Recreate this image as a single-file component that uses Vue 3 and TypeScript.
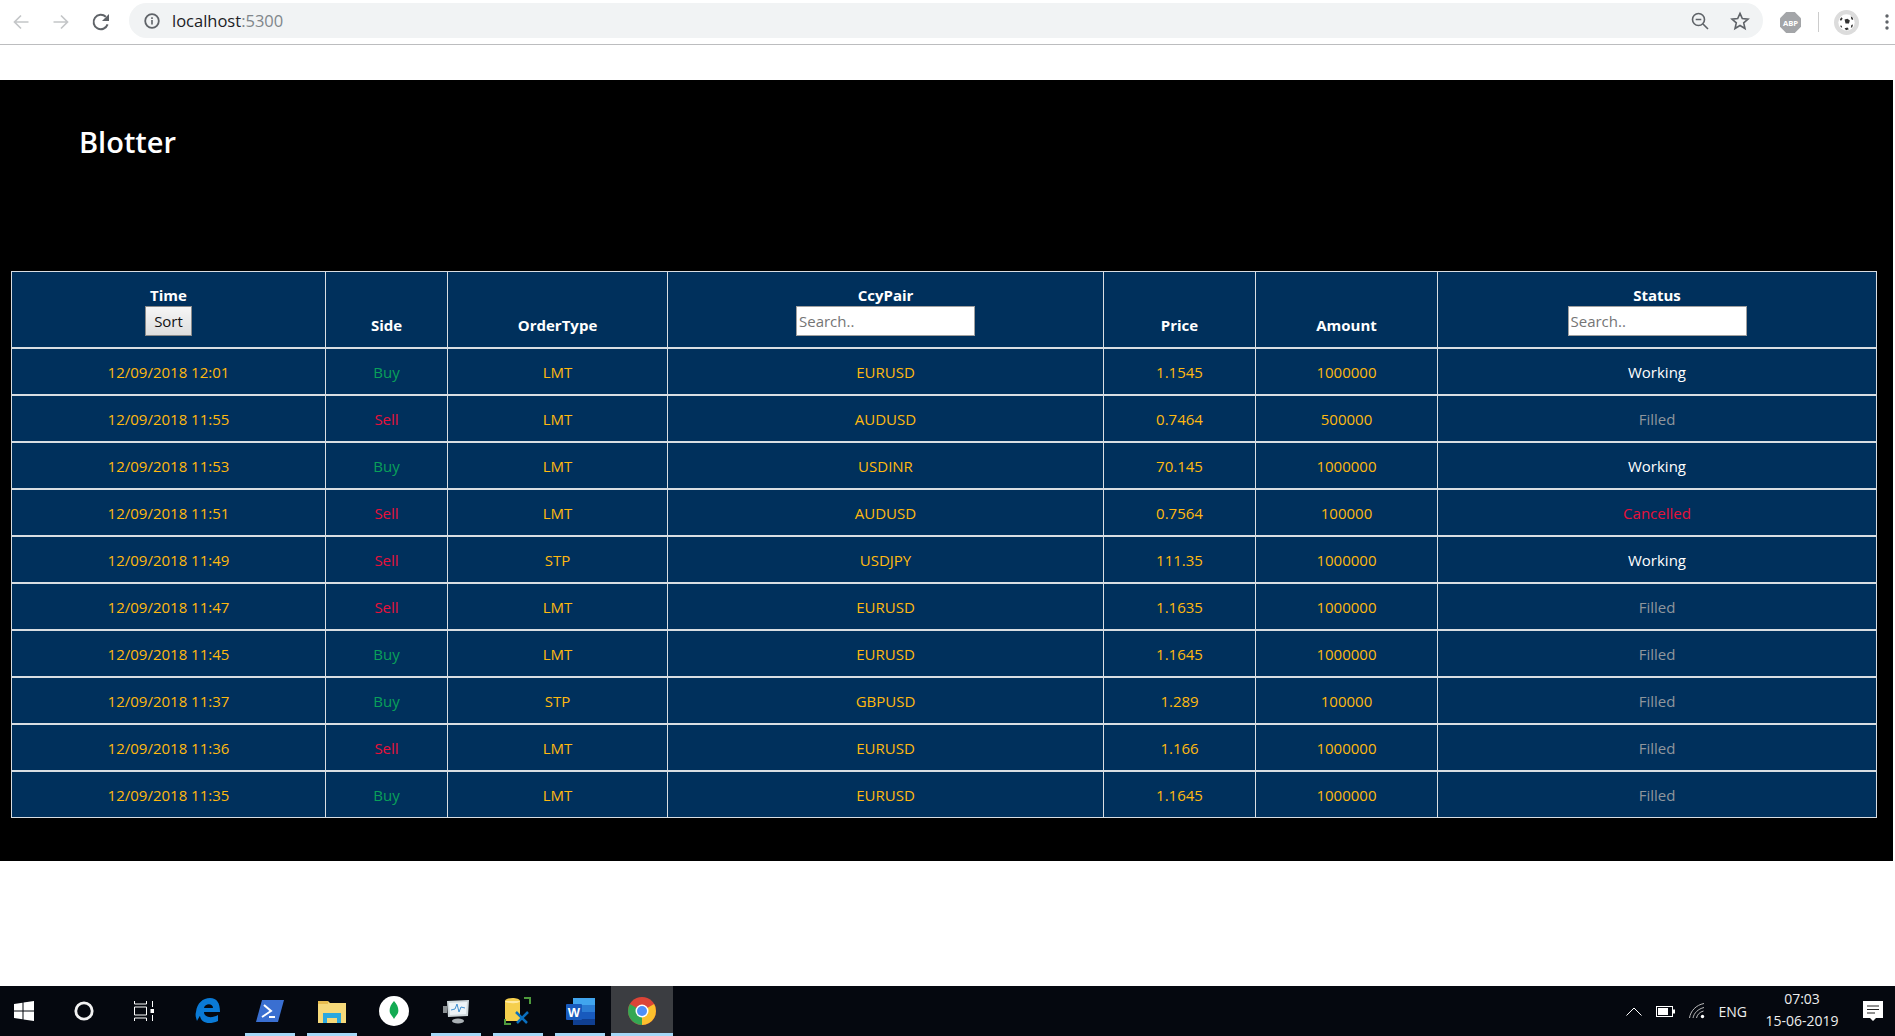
<template>
  <div class="screen">
    <header class="chrome-bar">
      <div class="nav-buttons">
        <svg class="nav-icon" viewBox="0 0 20 20"><path d="M17.500 10H3.500M10 3.500l-6.500 6.500 6.500 6.500" fill="none" stroke="#c4c6c8" stroke-width="1.700" /></svg>
        <svg class="nav-icon" viewBox="0 0 20 20"><path d="M2.500 10h14M10 3.500l6.500 6.500-6.500 6.500" fill="none" stroke="#c4c6c8" stroke-width="1.700" /></svg>
        <svg class="nav-icon" viewBox="0 0 20 20"><path d="M16.600 12.400A7.200 7.200 0 1 1 14.800 4.800" fill="none" stroke="#5f6368" stroke-width="2" /><path d="M18 2v7h-7z" fill="#5f6368" /></svg>
      </div>
      <div class="omnibox">
        <svg class="info-icon" viewBox="0 0 16 16"><circle cx="8" cy="8" r="6.800" fill="none" stroke="#5f6368" stroke-width="1.800" /><path d="M7.200 7h1.600v4.600H7.200zM7.200 4.300h1.600v1.600H7.200z" fill="#5f6368" /></svg>
        <span class="url">localhost<span class="url-port">:5300</span></span>
        <span class="spacer"></span>
        <svg class="omni-icon" viewBox="0 0 20 20"><circle cx="8.500" cy="8.500" r="6" fill="none" stroke="#5f6368" stroke-width="1.600" /><path d="M5.700 8.500h5.600M13 13l5 5" stroke="#5f6368" stroke-width="1.600" fill="none" /></svg>
        <svg class="omni-icon star" viewBox="0 0 20 20"><path d="M10 2.400l2.300 5.200 5.700.5-4.300 3.800 1.300 5.600-5-3-5 3 1.300-5.600L2 8.100l5.700-.5z" fill="none" stroke="#5f6368" stroke-width="1.600" /></svg>
      </div>
      <svg class="abp" viewBox="0 0 22 22"><path d="M6.500 0h9L22 6.500v9L15.500 22h-9L0 15.500v-9z" fill="#a3a5a8" /><text x="11" y="14.500" text-anchor="middle" class="abp-text">ABP</text></svg>
      <div class="toolbar-sep"></div>
      <svg class="avatar" viewBox="0 0 26 26">
        <circle cx="13" cy="13" r="13" fill="#dcdcdc" />
        <circle cx="13" cy="13" r="8.500" fill="#fff" />
        <path d="M11 10l3-1 2.500 2-1 3h-3.500zM6 9.500l2-2 1 1.500-1.800 2.500zM17.500 6.500l2 1.500.5 2.500-2-1zM6.500 16l1.500.5.5 2-1.500-.8zM11 19l3-.8 1.500 1.800-3 1zM18 15.500l1.800-.5-.8 3-1.500.5z" fill="#333" />
      </svg>
      <svg class="menu-dots" viewBox="0 0 4 16"><circle cx="2" cy="2" r="1.700" fill="#5f6368" /><circle cx="2" cy="8" r="1.700" fill="#5f6368" /><circle cx="2" cy="14" r="1.700" fill="#5f6368" /></svg>
    </header>

    <main class="page">
      <section class="blotter">
        <h1 class="title">Blotter</h1>
        <table class="orders">
          <colgroup>
            <col v-for="c in colWidths" :key="c" :width="c" />
          </colgroup>
          <thead>
            <tr>
              <th>
                <div>Time</div>
                <button class="sort-btn" type="button">Sort</button>
              </th>
              <th class="plain">Side</th>
              <th class="plain">OrderType</th>
              <th>
                <div>CcyPair</div>
                <input class="search" type="text" placeholder="Search.." />
              </th>
              <th class="plain">Price</th>
              <th class="plain">Amount</th>
              <th>
                <div>Status</div>
                <input class="search" type="text" placeholder="Search.." />
              </th>
            </tr>
          </thead>
          <tbody>
            <tr v-for="o in orders" :key="o.time">
              <td>{{ o.time }}</td>
              <td :class="o.side === 'Buy' ? 'buy' : 'sell'">{{ o.side }}</td>
              <td>{{ o.type }}</td>
              <td>{{ o.pair }}</td>
              <td>{{ o.price }}</td>
              <td>{{ o.amount }}</td>
              <td :class="'st-' + o.status.toLowerCase()">{{ o.status }}</td>
            </tr>
          </tbody>
        </table>
      </section>
    </main>

    <footer class="taskbar">
      <div class="task start">
        <svg width="20" height="20" viewBox="0 0 20 20"><path d="M0 3l8.500-1.200v7.700H0zM9.500 1.600L20 0v9.500H9.500zM0 10.500h8.500v7.700L0 17zM9.500 10.500H20V20L9.500 18.400z" fill="#fff" /></svg>
      </div>
      <div class="task cortana">
        <svg width="20" height="20" viewBox="0 0 20 20"><circle cx="10" cy="10" r="8.200" fill="none" stroke="#f2f2f2" stroke-width="2.800" /></svg>
      </div>
      <div class="task">
        <svg width="20" height="20" viewBox="0 0 20 20"><path d="M.5 0v3h12V0M.5 20v-3h12v3M.5 6h12v8H.5zM18.500 0v6M18.500 14v6" fill="none" stroke="#fff" /><rect x="16.500" y="8" width="4" height="4" fill="#fff" /></svg>
      </div>
      <div class="task app first-app">
        <svg width="26" height="26" viewBox="0 0 26 26"><path d="M1 14C2 5 8 0 15 0c7 0 10 5 10 14H9c0 5 7 7 14 3v6c-9 4-17 2-18-5-1 1-2 3-3 5-1-3-2-6-1-9zM9 10h9c0-5-8-5-9 0z" fill="#0a7ad6" /></svg>
      </div>
      <div class="task app running">
        <svg width="28" height="22" viewBox="0 0 28 22"><path d="M6 0h22l-6 22H0z" fill="#3a6fd1" /><path d="M8 5l7 6-9 6M13 17h6" fill="none" stroke="#fff" stroke-width="2" /></svg>
      </div>
      <div class="task app running">
        <svg width="28" height="24" viewBox="0 0 28 24"><path d="M0 2h10l2 2h16v20H0z" fill="#f6d97a" /><path d="M0 2h10v3H0z" fill="#e8bd4f" /><path d="M5 14h18v10h-4v-5H9v5H5z" fill="#2aa8e0" /></svg>
      </div>
      <div class="task app">
        <svg width="30" height="30" viewBox="0 0 30 30"><circle cx="15" cy="15" r="15" fill="#fff" /><path d="M15 5c4 4 5 9 4 12-1 2-3 4-4 6-1-2-3-4-4-6-1-3 0-8 4-12z" fill="#13aa52" /></svg>
      </div>
      <div class="task app running">
        <svg width="28" height="26" viewBox="0 0 28 26"><path d="M5 3l22-1-1 16-20 1z" fill="#cfd8dc" /><path d="M7 5l18-1-1 12-16 1z" fill="#eef4f8" /><path d="M9 12l4-1 2-5 2 8 2-5 4 1" fill="none" stroke="#3f8fd0" /><ellipse cx="16" cy="23" rx="6" ry="2.500" fill="#aab0b4" /><rect x="1" y="8" width="4" height="7" fill="#8a8f92" /></svg>
      </div>
      <div class="task app running">
        <svg width="28" height="28" viewBox="0 0 28 28"><path d="M1 4c0-4 15-4 15 0v20H1z" fill="#f5cf4d" /><path d="M1 4c0 3 15 3 15 0" fill="#ffe9a0" /><path d="M20 1h6v6M1 22v5h6" fill="none" stroke="#4e9a3c" stroke-width="2" /><path d="M12 15l11 11M24 15L13 26" stroke="#0a6fbf" stroke-width="2.500" /></svg>
      </div>
      <div class="task app running">
        <svg width="29" height="27" viewBox="0 0 29 27"><rect x="7" y="0" width="22" height="27" rx="1" fill="#2b7cd3" /><rect x="7" y="0" width="22" height="7" fill="#41a5ee" /><rect x="7" y="14" width="22" height="7" fill="#185abd" /><rect x="7" y="21" width="22" height="6" fill="#103f91" /><rect x="0" y="6" width="16" height="16" rx="1" fill="#185abd" /><text x="8" y="18.500" text-anchor="middle" class="word-w">W</text></svg>
      </div>
      <div class="task app running active">
        <svg width="28" height="28" viewBox="0 0 28 28">
          <circle cx="14" cy="14" r="14" fill="#db4437" />
          <path d="M14 14L26.100 7A14 14 0 0 1 14 28z" fill="#fbc02d" />
          <path d="M14 14L14 28A14 14 0 0 1 1.900 7z" fill="#34a853" />
          <circle cx="14" cy="14" r="6.500" fill="#fff" />
          <circle cx="14" cy="14" r="5" fill="#4f8ff7" />
        </svg>
      </div>
      <span class="spacer"></span>
      <div class="tray">
        <svg width="16" height="9" viewBox="0 0 16 9"><path d="M.5 8.500L8 1l7.500 7.500" fill="none" stroke="#fff" /></svg>
        <svg width="19" height="11" viewBox="0 0 19 11"><rect x=".5" y=".5" width="16" height="10" fill="none" stroke="#fff" /><rect x="2" y="2" width="10" height="7" fill="#fff" /><rect x="17" y="3.500" width="2" height="4" fill="#fff" /></svg>
        <svg width="16" height="16" viewBox="0 0 16 16"><path d="M.5 15C1.500 8 7 2 15 .5M4 15C5 10 9 6 15 4.500M7.500 15c.5-3 3-6 7-7" fill="none" stroke="#bbb" /><circle cx="13.500" cy="13.500" r="1.700" fill="#fff" /></svg>
        <span class="lang">ENG</span>
        <div class="clock">
          <div>07:03</div>
          <div>15-06-2019</div>
        </div>
        <svg class="notif" width="20" height="20" viewBox="0 0 20 20"><path d="M0 0h20v17h-7l-3 3-3-3H0z" fill="#fff" /><path d="M4 5h12M4 8.500h12M4 12h8" stroke="#222" /></svg>
      </div>
    </footer>
  </div>
</template>

<script setup lang="ts">
type Order = {
  time: string;
  side: 'Buy' | 'Sell';
  type: string;
  pair: string;
  price: string;
  amount: string;
  status: string;
};

const colWidths = [314, 122, 220, 436, 152, 182, 439];

const orders: Order[] = [
  { time: '12/09/2018 12:01', side: 'Buy', type: 'LMT', pair: 'EURUSD', price: '1.1545', amount: '1000000', status: 'Working' },
  { time: '12/09/2018 11:55', side: 'Sell', type: 'LMT', pair: 'AUDUSD', price: '0.7464', amount: '500000', status: 'Filled' },
  { time: '12/09/2018 11:53', side: 'Buy', type: 'LMT', pair: 'USDINR', price: '70.145', amount: '1000000', status: 'Working' },
  { time: '12/09/2018 11:51', side: 'Sell', type: 'LMT', pair: 'AUDUSD', price: '0.7564', amount: '100000', status: 'Cancelled' },
  { time: '12/09/2018 11:49', side: 'Sell', type: 'STP', pair: 'USDJPY', price: '111.35', amount: '1000000', status: 'Working' },
  { time: '12/09/2018 11:47', side: 'Sell', type: 'LMT', pair: 'EURUSD', price: '1.1635', amount: '1000000', status: 'Filled' },
  { time: '12/09/2018 11:45', side: 'Buy', type: 'LMT', pair: 'EURUSD', price: '1.1645', amount: '1000000', status: 'Filled' },
  { time: '12/09/2018 11:37', side: 'Buy', type: 'STP', pair: 'GBPUSD', price: '1.289', amount: '100000', status: 'Filled' },
  { time: '12/09/2018 11:36', side: 'Sell', type: 'LMT', pair: 'EURUSD', price: '1.166', amount: '1000000', status: 'Filled' },
  { time: '12/09/2018 11:35', side: 'Buy', type: 'LMT', pair: 'EURUSD', price: '1.1645', amount: '1000000', status: 'Filled' }
];
</script>

<style>
html,
body {
  margin: 0;
  background: #fff;
  overflow: hidden;
}
</style>

<style scoped>
.screen {
  width: 1895px;
  height: 1036px;
  display: flex;
  flex-direction: column;
  font-family: "Open Sans", "Noto Sans", sans-serif;
}

.chrome-bar {
  height: 44px;
  box-sizing: content-box;
  border-bottom: 1px solid #bcbdbf;
  display: flex;
  align-items: center;
  background: #fff;
  flex: none;
}

.nav-buttons {
  display: flex;
  gap: 20px;
  padding-left: 11px;
  width: 118px;
  box-sizing: border-box;
  margin-right: 11px;
}

.nav-icon {
  width: 20px;
  height: 20px;
}

.omnibox {
  width: 1634px;
  height: 35px;
  background: #f1f3f4;
  border-radius: 18px;
  display: flex;
  align-items: center;
  padding: 0 14px 0 15px;
  box-sizing: border-box;
  align-self: flex-start;
  margin-top: 3px;
}

.info-icon {
  width: 16px;
  height: 16px;
  margin-right: 12px;
}

.url {
  font-size: 16.500px;
  color: #202124;
}

.url-port {
  color: #80868b;
}

.spacer {
  flex: 1;
}

.omni-icon {
  width: 20px;
  height: 20px;
}

.star {
  margin-left: 20px;
  margin-right: -1px;
}

.abp {
  width: 21px;
  height: 21px;
  margin-left: 17px;
}

.abp-text {
  font-size: 8px;
  font-weight: 700;
  fill: #fff;
  font-family: "Open Sans", sans-serif;
}

.toolbar-sep {
  width: 1px;
  height: 20px;
  background: #ccc;
  margin-left: 17px;
}

.avatar {
  width: 25px;
  height: 25px;
  margin-left: 15px;
}

.menu-dots {
  width: 4px;
  height: 16px;
  margin-left: 26px;
}

.page {
  flex: 1;
  padding: 35px 2px 0 0;
  background: #fff;
}

.blotter {
  height: 781px;
  background: #000;
  padding: 41px 16px 0 11px;
  box-sizing: border-box;
}

.title {
  margin: 0 0 109px 68px;
  font-size: 29px;
  font-weight: 600;
  line-height: 41px;
  color: #fff;
}

.orders {
  border-collapse: collapse;
  table-layout: fixed;
  width: 1865px;
  background: #00305c;
  font-size: 15px;
  text-align: center;
}

.orders th,
.orders td {
  border: 1px solid #d8dde2;
  padding: 0;
}

.orders th {
  height: 64px;
  border-bottom-width: 2px;
  color: #fff;
  font-weight: 700;
  vertical-align: bottom;
  padding-bottom: 11px;
  line-height: 18px;
}

.orders th.plain {
  height: 62px;
  padding-bottom: 13px;
}

.orders td {
  height: 45px;
  border-bottom-width: 2px;
  color: #ffb90f;
}

.orders tbody tr:last-child td {
  border-bottom-width: 1px;
}

.sort-btn {
  display: block;
  margin: 2px auto 0;
  width: 47px;
  height: 30px;
  padding: 0;
  box-sizing: border-box;
  border: 1px solid #8a8a8a;
  background: linear-gradient(#f6f6f6, #dedede);
  font: 15px "Open Sans", sans-serif;
  color: #111;
}

.search {
  display: block;
  margin: 2px auto 0;
  width: 179px;
  height: 30px;
  padding: 0 2px;
  box-sizing: border-box;
  border: 1px solid #a0a0a0;
  background: #fff;
  font: 15px "Open Sans", sans-serif;
  outline: none;
}

.search::placeholder {
  color: #757575;
}

.orders td.buy {
  color: #0aa05a;
}

.orders td.sell,
.orders td.st-cancelled {
  color: #e8103a;
}

.orders td.st-working {
  color: #fff;
}

.orders td.st-filled {
  color: #8f969c;
}

.taskbar {
  height: 50px;
  flex: none;
  background: #05080f;
  display: flex;
  align-items: stretch;
}

.task {
  width: 60px;
  display: flex;
  align-items: center;
  justify-content: center;
  position: relative;
  flex: none;
}

.start {
  width: 48px;
}

.cortana {
  margin-left: 6px;
}

.app {
  width: 62px;
}

.first-app {
  margin-left: 3px;
}

.running::after {
  content: "";
  position: absolute;
  left: 6px;
  right: 6px;
  bottom: 0;
  height: 3px;
  background: #a5d8f7;
}

.active {
  background: #3b3d41;
}

.active::after {
  left: 0;
  right: 0;
}

.word-w {
  font-size: 13px;
  font-weight: 700;
  fill: #fff;
  font-family: "Liberation Sans", sans-serif;
}

.tray {
  display: flex;
  align-items: center;
  color: #eee;
  gap: 14px;
  padding-right: 12px;
}

.lang {
  font-size: 14px;
  margin-right: -6px;
}

.clock {
  font-size: 14px;
  line-height: 22px;
  text-align: center;
  width: 94px;
  margin-top: -3px;
}
</style>
